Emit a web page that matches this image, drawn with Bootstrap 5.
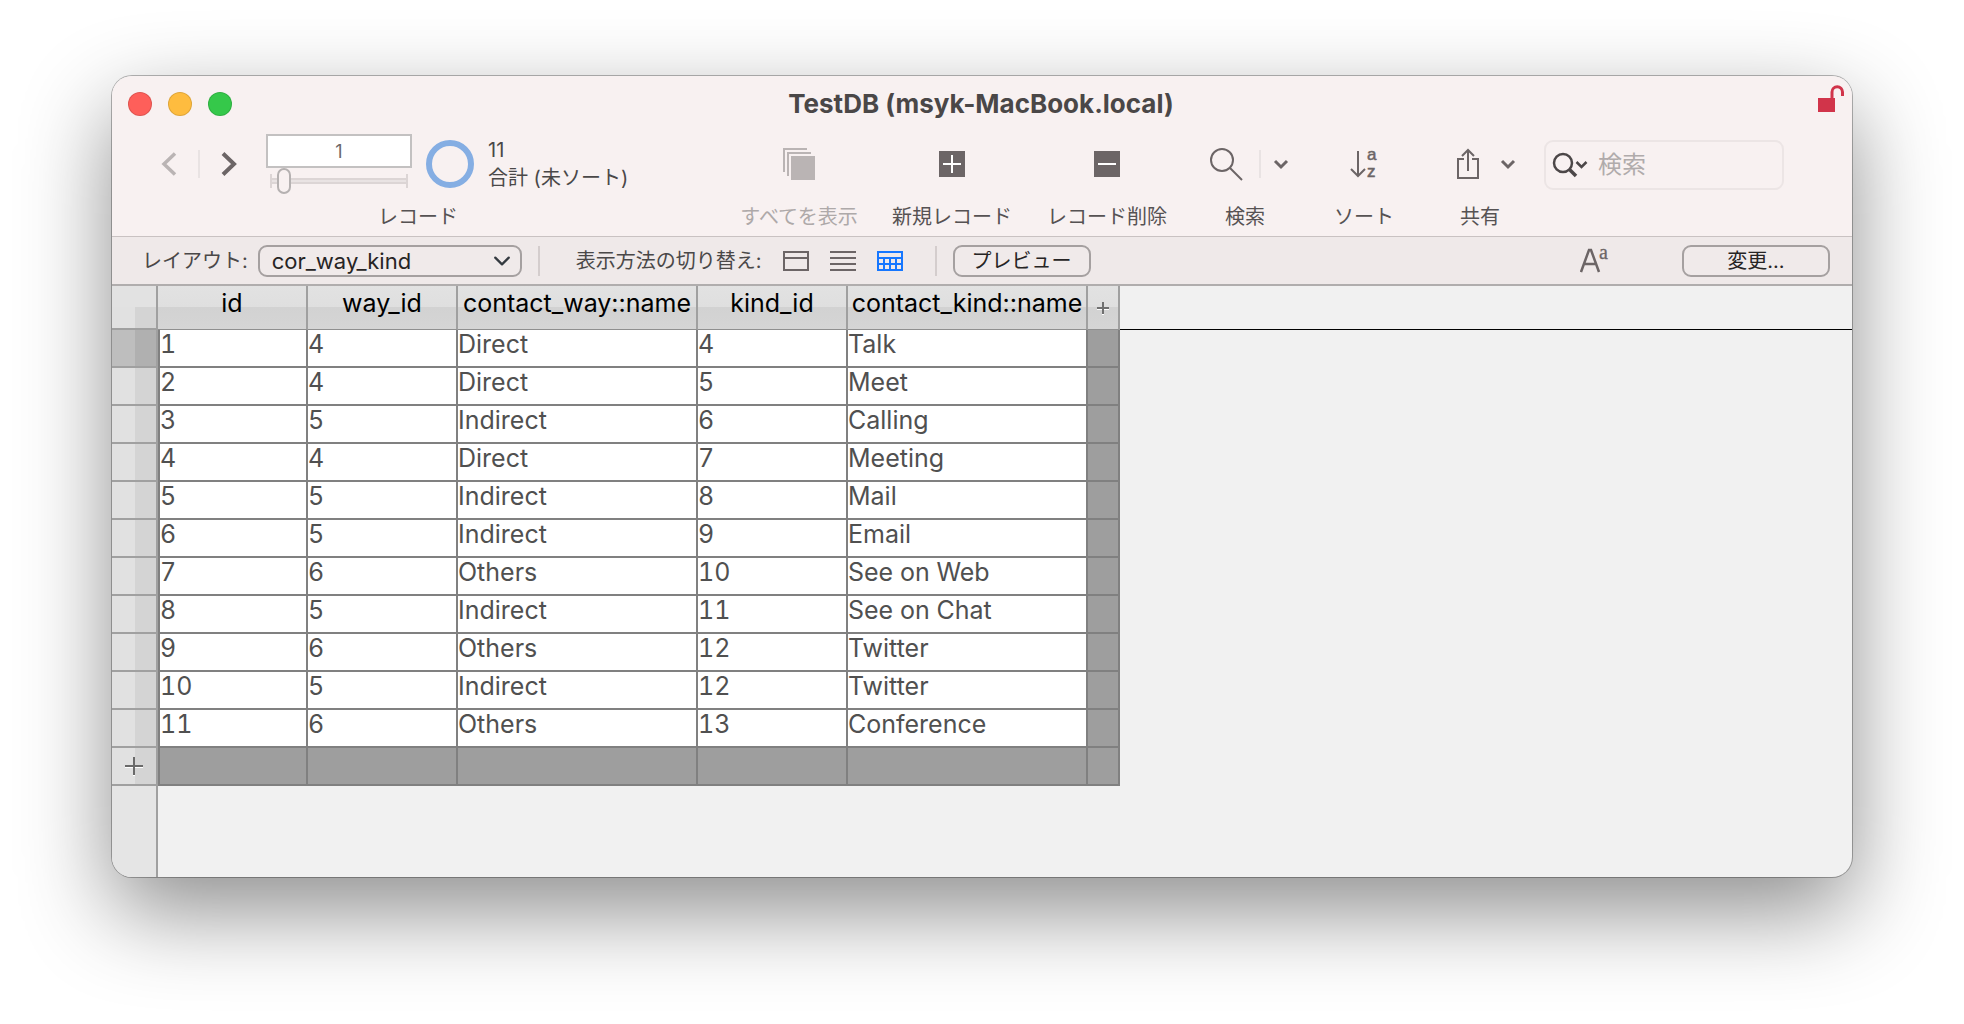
<!DOCTYPE html>
<html lang="ja">
<head>
<meta charset="utf-8">
<meta name="viewport" content="width=device-width, initial-scale=1">
<title>TestDB (msyk-MacBook.local)</title>
<link href="https://cdn.jsdelivr.net/npm/bootstrap@5.3.0/dist/css/bootstrap.min.css" rel="stylesheet">
<style>
body{font-family:Inter,"Noto Sans CJK JP",sans-serif;font-size:20px;line-height:28px;color:#4a4848;background:#fff;padding:76px 112px 147px}
.db-window{border-radius:20px;background:#f1f1f1;box-shadow:0 0 0 1px rgba(0,0,0,.28),0 34px 90px rgba(0,0,0,.45)}
.chrome{background:#f8f1f1;border-bottom:1px solid #c9c2c2}
.title-row{height:56px;padding:0 8px 0 16px}
.title-row h1{font-size:26px;line-height:32px;font-weight:700;color:#4a4747}
.light{width:24px;height:24px;border-radius:50%;border:1px solid rgba(0,0,0,.12);padding:0}
.red{background:#fe5f5a}.yellow{background:#febc3f}.green{background:#35c84a}
.side{width:140px}
.side.end{width:150px}
.tool{border:0;background:none;padding:0;color:#6c6566}
.tools{height:104px;padding-right:68px}
.item{display:flex;flex-direction:column;align-items:center}
.item .face{height:64px;display:flex;align-items:center}
.item .caption{line-height:28px;margin-top:7px;color:#565253;white-space:nowrap}
.item:disabled .caption{color:#aea9a9}
.w-all{width:150px}.w-new{width:156px}.w-del{width:154px}.w-find{width:122px}.w-sort{width:116px}
.nav-pair{padding-left:48px;gap:20px;margin-right:28px}
.rule{width:2px;height:28px;background:#e9e3e3}
.rec-input{width:146px;height:34px;border:2px solid #c3c1c1;border-radius:0;font-size:18px;text-align:center;color:#6b6869;padding:0}
.rec-range{width:138px;height:26px;display:block;appearance:none;background:none;margin:0 auto}
.rec-range::-webkit-slider-runnable-track{height:14px;border:solid #dcd5d5;border-width:0 2px;background:linear-gradient(transparent 4px,#dcd5d5 4px,#dcd5d5 6px,#e9e3e3 6px,#e9e3e3 8px,#dcd5d5 8px,#dcd5d5 10px,transparent 10px)}
.rec-range::-webkit-slider-thumb{appearance:none;width:14px;height:26px;margin-top:-6px;border:2px solid #b5b1b1;border-radius:7px;background:#f8f1f1}
.found{gap:14px;margin-left:14px}
.share{gap:20px;padding-left:12px}
.search{width:240px;height:50px;border:2px solid #ece5e5;border-radius:9px;padding-left:6px;margin-left:6px}
.search input{border:0;background:none;min-width:0;outline:0;font-size:24px;padding:0;margin-left:10px;color:#4a4848}
.search input::placeholder{color:#b0abab;opacity:1}
.layout-bar{height:49px;background:#efe9e9;border-bottom:2px solid #b0adad;padding:0 22px 0 30px}
.layout-bar .form-select,.push{height:32px;border:2px solid #a5a0a0;border-radius:9px;background-color:#f0eaea;color:#262424;padding:0}
.layout-bar .form-select{width:264px;font-size:22px;line-height:28px;padding:0 0 0 12px;margin-left:10px;background-size:18px;background-position:right 9px center}
.push{line-height:26px}
.push.preview{width:138px}
.push.change{width:148px;margin-left:72px}
.views{gap:21px;margin-left:21px}
.rule-dark{width:2px;height:30px;background:#d4cdcd}
.rule-dark.before{margin:0 16px 0 32px}
.rule-dark.after{margin:0 36px 0 16px}
.grid{table-layout:fixed;width:100%;border-collapse:separate;border-spacing:0;font-size:25px;line-height:28px;color:#505050}
.grid th,.grid td{padding:0;vertical-align:top;white-space:nowrap;overflow:hidden}
.grid thead th{height:44px;font-weight:400;color:#000;text-align:center;padding-top:3px;border-right:2px solid #a0a0a0;border-bottom:1px solid #8f8f8f;background:linear-gradient(#e2e2e2 0,#dfdfdf 50%,#d2d2d2 50%,#d5d5d5 100%)}
.grid thead th.pick{background:linear-gradient(#e2e2e2 50%,transparent 50%),linear-gradient(90deg,#e1e1e1 23px,#d4d4d4 23px);border-bottom:2px solid #a0a0a0}
.grid thead th.blank,.grid td.blank{background:none;border-right:0}
.grid thead th.blank{border-bottom:1px solid #000}
.grid tbody{font-variant-numeric:tabular-nums}
.grid tbody td{height:38px;background:#fff;border:solid #808080;border-width:0 2px 2px 0}
.grid tbody th{border:solid #a0a0a0;border-width:0 2px 2px 0;background:linear-gradient(90deg,#e1e1e1 23px,#d4d4d4 23px)}
.grid tbody tr.current th{background:linear-gradient(90deg,#bebebe 23px,#b0b0b0 23px)}
.grid tbody td.first{border-left-width:2px}
.grid tbody .off{background:#9e9e9e}
.grid tbody td.blank{background:none;border:0}
.c-pick{width:46px}.c-id{width:150px}.c-name{width:240px}.c-add{width:32px}
.gutter{width:46px;background:#e5e5e5;border-right:2px solid #a0a0a0}
</style>
</head>
<body class="d-flex flex-column min-vh-100">
<main class="db-window flex-grow-1 d-flex flex-column overflow-hidden">
<header class="chrome">
 <div class="title-row d-flex align-items-center justify-content-between">
  <div class="side d-flex gap-3"><button class="light red" aria-label="閉じる"></button><button class="light yellow" aria-label="しまう"></button><button class="light green" aria-label="拡大"></button></div>
  <h1 class="m-0">TestDB (msyk-MacBook.local)</h1>
  <div class="side end text-end"><svg width="26" height="40" viewBox="0 2 26 40" aria-hidden="true"><path d="M0 14h17v14H0z" fill="#d1344a" transform="translate(0 2)"/><path d="M14 17V10a5 5 0 0 1 10.500 0v4" fill="none" stroke="#d1344a" stroke-width="3"/></svg></div>
 </div>
 <div class="tools d-flex align-items-start">
  <div class="item flex-grow-1">
   <div class="face w-100">
    <div class="nav-pair d-flex align-items-center">
     <button class="tool d-flex" aria-label="前へ"><svg width="18" height="26" viewBox="0 0 18 26"><path d="M15 2.500 4 13l11 10.500" fill="none" stroke="#bab4b4" stroke-width="3.500"/></svg></button>
     <span class="rule"></span>
     <button class="tool d-flex" aria-label="次へ"><svg width="18" height="26" viewBox="0 0 18 26"><path d="M3 2.500 14 13 3 23.500" fill="none" stroke="#6c6566" stroke-width="4"/></svg></button>
    </div>
    <div><input class="rec-input d-block" aria-label="レコード番号" value="1"><input class="rec-range" type="range" min="0" max="25" value="1" aria-label="レコード"></div>
    <div class="found d-flex align-items-center">
     <svg width="48" height="48" viewBox="0 0 48 48" aria-hidden="true"><circle cx="24" cy="24" r="21" fill="none" stroke="#85aee3" stroke-width="6"/></svg>
     <div class="text-nowrap">11<br>合計 (未ソート)</div>
    </div>
   </div>
   <span class="caption">レコード</span>
  </div>
  <button class="tool item w-all" disabled><span class="face"><svg width="32" height="32" viewBox="0 0 32 32"><path d="M1 24V1h23M5 28V5h23" fill="none" stroke="#bab4b4" stroke-width="2"/><path d="M8 8h24v24H8z" fill="#bab4b4"/></svg></span><span class="caption">すべてを表示</span></button>
  <button class="tool item w-new"><span class="face"><svg width="26" height="26" viewBox="0 0 26 26"><path d="M0 0h26v26H0z" fill="#6c6566"/><path d="M4 13h18M13 4v18" stroke="#fff" stroke-width="2"/></svg></span><span class="caption">新規レコード</span></button>
  <button class="tool item w-del"><span class="face"><svg width="26" height="26" viewBox="0 0 26 26"><path d="M0 0h26v26H0z" fill="#6c6566"/><path d="M4 13h18" stroke="#fff" stroke-width="2"/></svg></span><span class="caption">レコード削除</span></button>
  <button class="tool item w-find"><span class="face ps-2"><svg width="34" height="34" viewBox="0 0 34 34"><circle cx="13" cy="13" r="11" fill="none" stroke="#6c6566" stroke-width="2"/><path d="m21 21 12 12" stroke="#6c6566" stroke-width="2"/></svg><span class="rule ms-3 me-2"></span><svg class="ms-1" width="16" height="12" viewBox="0 0 16 12"><path d="m2 3 6 6 6-6" fill="none" stroke="#6c6566" stroke-width="3"/></svg></span><span class="caption">検索</span></button>
  <button class="tool item w-sort"><span class="face"><svg width="28" height="44" viewBox="0 -7 28 44"><path d="M8 2v25M1 20l7 7 7-7" fill="none" stroke="#6c6566" stroke-width="2"/><g font-family="Liberation Sans" font-size="17" fill="#6c6566" stroke="#6c6566" stroke-width=".5"><text x="17" y="11">a</text><text x="17" y="28">z</text></g></svg></span><span class="caption">ソート</span></button>
  <button class="tool item w-sort"><span class="face share"><svg width="24" height="32" viewBox="0 0 24 32"><path d="M8 11H2v19h20V11h-6M12 23V2M6 8l6-6 6 6" fill="none" stroke="#6c6566" stroke-width="2"/></svg><svg width="16" height="12" viewBox="0 0 16 12"><path d="m2 3 6 6 6-6" fill="none" stroke="#6c6566" stroke-width="3"/></svg></span><span class="caption">共有</span></button>
  <label class="search d-flex align-items-center mt-2"><svg class="flex-shrink-0" width="36" height="26" viewBox="0 0 36 26"><circle cx="11" cy="11" r="9" fill="none" stroke="#4c4748" stroke-width="2.500"/><path d="m17 17 7 7" stroke="#4c4748" stroke-width="3.500"/><path d="m24.500 10 5 5 5-5" fill="none" stroke="#4c4748" stroke-width="2.500"/></svg><input class="flex-grow-1" type="search" placeholder="検索" aria-label="検索"></label>
 </div>
</header>
<div class="layout-bar d-flex align-items-center">
 <label for="layout" class="text-nowrap">レイアウト:</label>
 <select id="layout" class="form-select"><option>cor_way_kind</option></select>
 <span class="rule-dark after"></span>
 <span class="text-nowrap">表示方法の切り替え:</span>
 <div class="views d-flex">
  <button class="tool d-flex" aria-label="フォーム"><svg width="26" height="20" viewBox="0 0 26 20"><path d="M1 1h24v18H1zM1 7h24" fill="none" stroke="#6c6566" stroke-width="2"/></svg></button>
  <button class="tool d-flex" aria-label="リスト"><svg width="26" height="20" viewBox="0 0 26 20"><path d="M0 1h26M0 7h26M0 13h26M0 19h26" stroke="#6c6566" stroke-width="2"/></svg></button>
  <button class="tool d-flex" aria-label="表"><svg width="26" height="20" viewBox="0 0 26 20"><path d="M1 1h24v18H1zM1 7h24M1 13h24M7 7v12M13 7v12M19 7v12" fill="none" stroke="#1677ff" stroke-width="2"/></svg></button>
 </div>
 <span class="rule-dark before"></span>
 <button class="push preview">プレビュー</button>
 <button class="tool d-flex ms-auto" aria-label="書式"><svg width="30" height="42" viewBox="0 -10 30 42"><path d="m1 22 8-22h2l8 22M4 14h12" fill="none" stroke="#6c6566" stroke-width="2.500"/><text x="19" y="9" font-family="Liberation Serif" font-size="20" fill="#6c6566" stroke="#6c6566" stroke-width=".3">a</text></svg></button>
 <button class="push change">変更...</button>
</div>
<table class="grid">
<colgroup><col class="c-pick"><col class="c-id"><col class="c-id"><col class="c-name"><col class="c-id"><col class="c-name"><col class="c-add"><col></colgroup>
<thead><tr><th class="pick"></th><th>id</th><th>way_id</th><th>contact_way::name</th><th>kind_id</th><th>contact_kind::name</th><th class="align-middle pt-0"><svg class="d-block mx-auto" width="14" height="14" viewBox="0 0 14 14"><path d="M1 8h12M7 3v11" stroke="#fff" stroke-width="2"/><path d="M1 7h12M7 1v12" stroke="#707070" stroke-width="2"/></svg></th><th class="blank"></th></tr></thead>
<tbody>
<tr class="current"><th></th><td class="first">1</td><td>4</td><td>Direct</td><td>4</td><td>Talk</td><td class="off"></td><td class="blank"></td></tr>
<tr><th></th><td class="first">2</td><td>4</td><td>Direct</td><td>5</td><td>Meet</td><td class="off"></td><td class="blank"></td></tr>
<tr><th></th><td class="first">3</td><td>5</td><td>Indirect</td><td>6</td><td>Calling</td><td class="off"></td><td class="blank"></td></tr>
<tr><th></th><td class="first">4</td><td>4</td><td>Direct</td><td>7</td><td>Meeting</td><td class="off"></td><td class="blank"></td></tr>
<tr><th></th><td class="first">5</td><td>5</td><td>Indirect</td><td>8</td><td>Mail</td><td class="off"></td><td class="blank"></td></tr>
<tr><th></th><td class="first">6</td><td>5</td><td>Indirect</td><td>9</td><td>Email</td><td class="off"></td><td class="blank"></td></tr>
<tr><th></th><td class="first">7</td><td>6</td><td>Others</td><td>10</td><td>See on Web</td><td class="off"></td><td class="blank"></td></tr>
<tr><th></th><td class="first">8</td><td>5</td><td>Indirect</td><td>11</td><td>See on Chat</td><td class="off"></td><td class="blank"></td></tr>
<tr><th></th><td class="first">9</td><td>6</td><td>Others</td><td>12</td><td>Twitter</td><td class="off"></td><td class="blank"></td></tr>
<tr><th></th><td class="first">10</td><td>5</td><td>Indirect</td><td>12</td><td>Twitter</td><td class="off"></td><td class="blank"></td></tr>
<tr><th></th><td class="first">11</td><td>6</td><td>Others</td><td>13</td><td>Conference</td><td class="off"></td><td class="blank"></td></tr>
<tr><th class="align-middle"><svg class="d-block mx-auto" width="20" height="20" viewBox="0 0 20 20"><path d="M1 11h18M10 3v17" stroke="#fff" stroke-width="2"/><path d="M1 10h18M10 1v18" stroke="#6a6a6a" stroke-width="2"/></svg></th><td class="first off"></td><td class="off"></td><td class="off"></td><td class="off"></td><td class="off"></td><td class="off"></td><td class="blank"></td></tr>
</tbody>
</table>
<div class="gutter flex-grow-1"></div>
</main>
<script src="https://cdn.jsdelivr.net/npm/bootstrap@5.3.0/dist/js/bootstrap.bundle.min.js"></script>
</body>
</html>
